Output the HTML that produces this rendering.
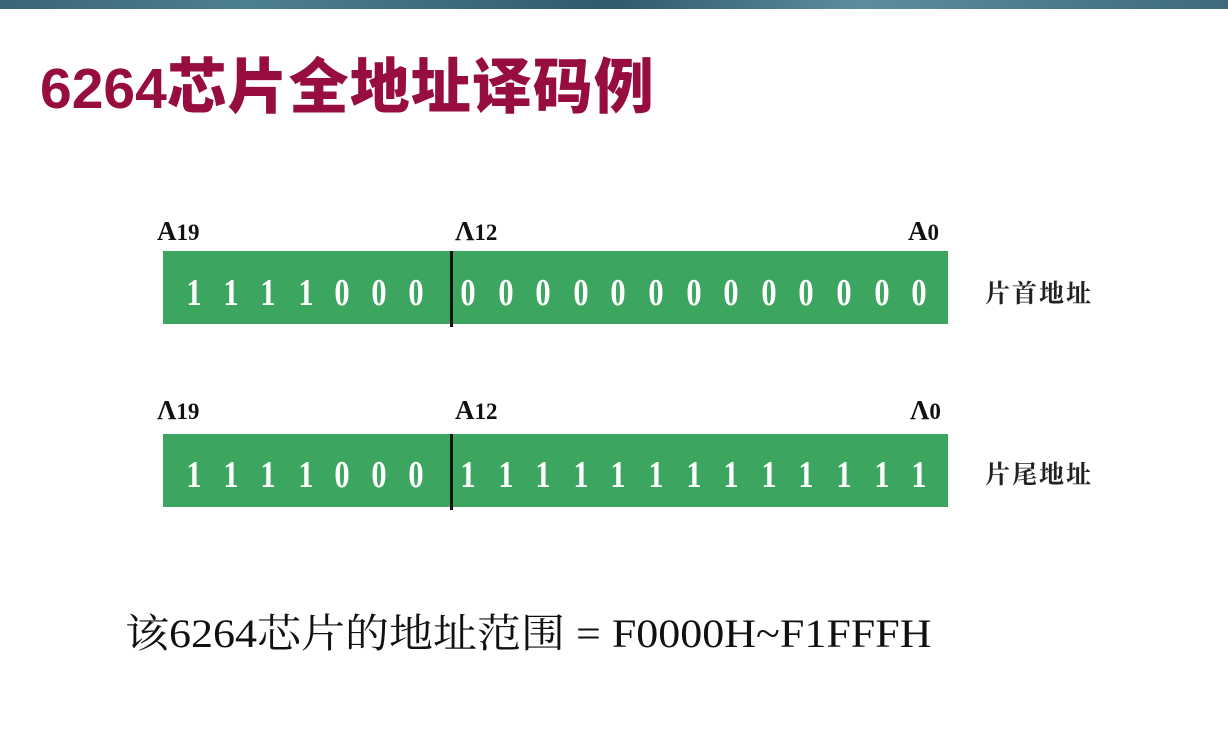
<!DOCTYPE html>
<html><head><meta charset="utf-8"><style>
body{margin:0;width:1228px;height:750px;background:#fff;position:relative;overflow:hidden;font-family:"Liberation Serif","Noto Serif CJK SC",serif}
.top{position:absolute;left:0;top:0;width:1228px;height:9px;background:linear-gradient(90deg,#3a6478,#4d7f93 20%,#2f5a6e 50%,#5c8d9e 70%,#3d6a7d)}
.title{position:absolute;left:40px;top:55px;font:bold 57px "Liberation Sans","Noto Sans CJK SC",sans-serif;color:#970d3f;white-space:nowrap;line-height:1.1}
.title .c{font-size:60px;font-weight:900;letter-spacing:1px}
.bar{position:absolute;left:163px;width:785px;height:73px;background:#3ca660}
.div{position:absolute;left:450px;width:3px;background:#111}
.d{position:absolute;color:#fff;font-weight:bold;font-size:38px;transform:translateX(-50%) scaleX(0.8);line-height:1}
.lab{position:absolute;font-weight:bold;font-size:27px;color:#111;line-height:1}
.side{position:absolute;left:985px;font-size:25px;color:#222;font-family:"Noto Serif CJK SC",serif;font-weight:bold;letter-spacing:2px}
.bottom{position:absolute;left:125px;top:602px;font-size:40px;color:#111;white-space:nowrap;transform-origin:0 0;transform:scaleX(1.1)}
</style></head><body>
<div class="top"></div>
<div class="title">6264<span class="c">芯片全地址译码例</span></div>

<div class="lab" style="left:157px;top:218px">A<span style="font-size:23px">19</span></div>
<div class="lab" style="left:455px;top:218px">Λ<span style="font-size:23px">12</span></div>
<div class="lab" style="left:908px;top:218px">A<span style="font-size:23px">0</span></div>
<div class="bar" style="top:251px"></div>
<div class="div" style="top:251px;height:76px"></div>
<div class="side" style="top:274px">片首地址</div>

<div class="lab" style="left:157px;top:397px">Λ<span style="font-size:23px">19</span></div>
<div class="lab" style="left:455px;top:397px">A<span style="font-size:23px">12</span></div>
<div class="lab" style="left:910px;top:397px">Λ<span style="font-size:23px">0</span></div>
<div class="bar" style="top:434px"></div>
<div class="div" style="top:434px;height:76px"></div>
<div class="side" style="top:455px">片尾地址</div>

<div class="bottom">该6264芯片的地址范围 = F0000H~F1FFFH</div>
<script>
function row(top,bits){var xs=[194,231,268,306,342,379,416];for(var i=0;i<13;i++)xs.push(468+i*37.6);
for(var i=0;i<20;i++){var s=document.createElement('div');s.className='d';s.style.left=xs[i]+'px';s.style.top=top+'px';s.textContent=bits[i];document.body.appendChild(s);}}
row(274,"11110000000000000000");row(456,"11110001111111111111");
</script>
</body></html>
